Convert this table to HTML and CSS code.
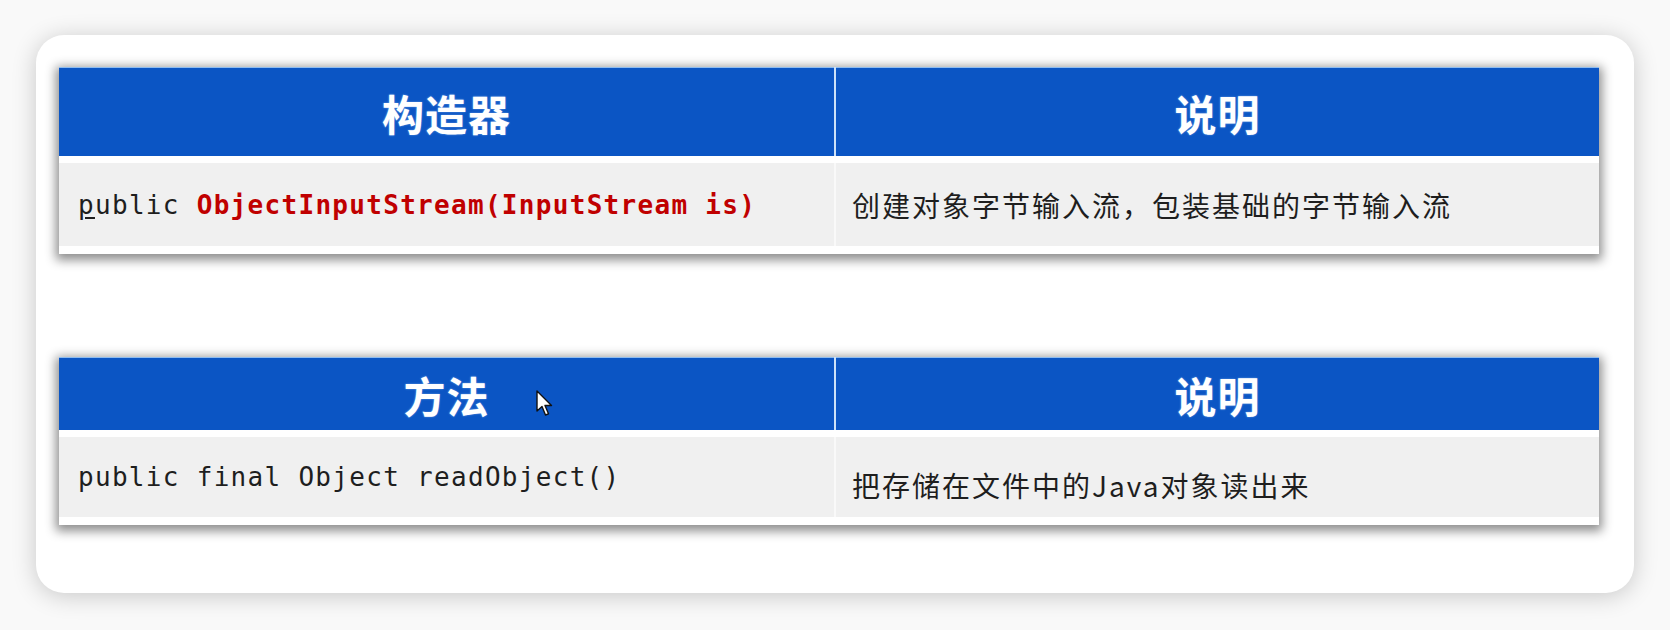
FILE: index.html
```html
<!DOCTYPE html>
<html lang="zh-CN">

<head>
    <meta charset="UTF-8">
    <title>ObjectInputStream</title>
    <link rel="stylesheet" href="styles.css">
</head>

<body>
    <div class="card">
        <!-- Constructor -->
        <table class="api-table ctor">
            <thead>
                <tr>
                    <th>构造器</th>
                    <th>说明</th>
                </tr>
            </thead>
            <tbody>
                <tr>
                    <td class="code"><span class="caret">p</span>ublic <span class="sig">ObjectInputStream(InputStream is)</span></td>
                    <td class="desc">创建对象字节输入流，包装基础的字节输入流</td>
                </tr>
            </tbody>
        </table>

        <!-- Method -->
        <table class="api-table method">
            <thead>
                <tr>
                    <th>方法</th>
                    <th>说明</th>
                </tr>
            </thead>
            <tbody>
                <tr>
                    <td class="code">public final Object readObject()</td>
                    <td class="desc">把存储在文件中的Java对象读出来</td>
                </tr>
            </tbody>
        </table>

        <svg class="cursor" width="17" height="27" viewBox="0 0 17 27">
            <path d="M1 1 L1 21 L6 16.5 L9.5 25 L12.5 23.8 L9 15.5 L15.5 15.5 Z" fill="#fff" stroke="#111" stroke-width="1.4" stroke-linejoin="round"/>
        </svg>
    </div>
</body>

</html>
```

FILE: styles.css
```css
body {
    margin: 0;
    padding: 35px 36px;
    background-color: #f9f9f9;
    font-family: "Noto Sans CJK SC", sans-serif;
}

.card {
    position: relative;
    width: 1598px;
    height: 558px;
    box-sizing: border-box;
    padding: 32px 35px 0 23px;
    background: #fff;
    border-radius: 28px;
    box-shadow: 0px 3px 24px rgba(0, 0, 0, 0.2);
}

.api-table {
    width: 1540px;
    table-layout: fixed;
    border-collapse: collapse;
    border-top: 1px solid #8fbdf0;
    border-bottom: 8px solid #fff;
    background: #f0f0f0;
    box-shadow: 0px 3px 10px 3px rgba(0, 0, 0, 0.45);
}

.method {
    margin-top: 103px;
}

.api-table th {
    background-color: #0b55c4;
    color: #fff;
    font-size: 42px;
    font-weight: bold;
    letter-spacing: 1px;
    text-align: center;
    padding: 0;
    border-bottom: 7px solid #fff;
    text-shadow: 0px 0px 2px rgba(180, 215, 255, 0.6);
}

.api-table th:first-child {
    width: 775px;
    border-right: 2px solid #cde1f8;
}

.ctor th {
    height: 88px;
}

.method th {
    height: 72px;
}

.api-table td {
    padding: 0;
    color: #1e1e1e;
    vertical-align: middle;
}

.api-table td:first-child {
    border-right: 2px solid #f9f9f9;
}

.ctor td {
    height: 83px;
}

.method td {
    height: 80px;
}

.code {
    padding-left: 19px !important;
    font-family: "DejaVu Sans Mono", "Liberation Mono", monospace;
    font-size: 26px;
    letter-spacing: 1.3px;
    white-space: nowrap;
}

.sig {
    color: #c00000;
    font-weight: bold;
}

.caret {
    text-decoration: underline;
    text-underline-offset: 3px;
}

.desc {
    padding-left: 16px !important;
    font-size: 28px;
    letter-spacing: 2px;
}

.method .desc {
    height: 64px;
    padding-top: 16px !important;
}

.cursor {
    position: absolute;
    left: 500px;
    top: 355px;
}
```
